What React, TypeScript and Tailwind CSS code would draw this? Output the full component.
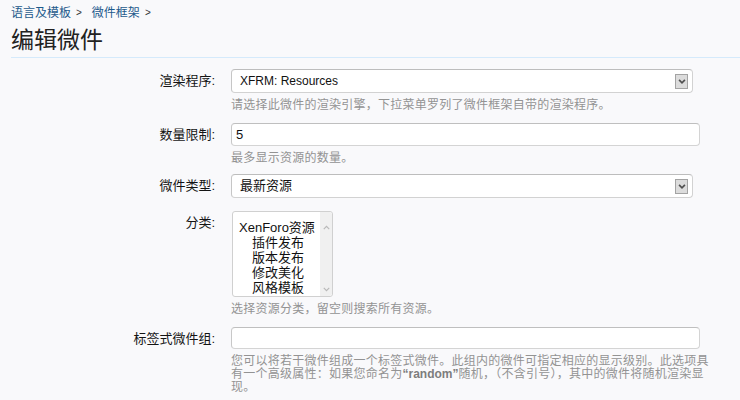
import type { ReactNode } from 'react';

const Chevron = ({ up = false, color = '#505050', w = 9, h = 6, sw = 2 }: { up?: boolean; color?: string; w?: number; h?: number; sw?: number }) => (
    <svg width={w} height={h} viewBox="0 0 9 6" fill="none">
        <path
            d={up ? 'M1 5 L4.5 1.5 L8 5' : 'M1 1 L4.5 4.5 L8 1'}
            stroke={color}
            strokeWidth={sw}
        />
    </svg>
);

const Label = ({ children }: { children: ReactNode }) => (
    <div className="w-[231px] shrink-0 pr-[16px] text-right text-[13px] leading-[24px] text-[#141414]">
        {children}
    </div>
);

const Help = ({ children }: { children: ReactNode }) => (
    <div className="mt-[6px] whitespace-nowrap text-[12px] leading-[13px] tracking-[0.25px] text-[#939393]">
        {children}
    </div>
);

const SelectBox = ({ value, small = false }: { value: string; small?: boolean }) => (
    <div className="flex h-[24px] w-[462px] items-center justify-between rounded-[4px] border border-[#d2d2d2] border-t-[#bdbdbd] border-l-[#c6c6c6] bg-white pl-[8px] pr-[4px]">
        <span className={small ? 'text-[12px] text-[#111]' : 'text-[13px] text-[#111]'}>{value}</span>
        <span className="flex h-[15px] w-[13px] items-center justify-center border border-[#a3a3a3] bg-[#dcdcdc]">
            <Chevron w={8} h={5} />
        </span>
    </div>
);

const TextInput = ({ value = '', h }: { value?: string; h: string }) => (
    <div className={`flex ${h} w-[469px] items-center rounded-[4px] border border-[#d4d4d4] border-t-[#bfbfbf] border-l-[#c8c8c8] bg-white pl-[4px] text-[13px] text-[#111]`}>
        {value}
    </div>
);

const categories = [
    { name: 'XenForo资源', child: false },
    { name: '插件发布', child: true },
    { name: '版本发布', child: true },
    { name: '修改美化', child: true },
    { name: '风格模板', child: true },
];

export default function App() {
    return (
        <div className="h-[400px] w-[740px] overflow-hidden bg-[#f9f9fb] font-['Liberation_Sans','Noto_Sans_CJK_SC',sans-serif]">
            {/* Header */}
            <div className="pl-[11px] pt-[6px]">
                <nav className="flex items-center text-[12px] leading-[14px]">
                    <span className="text-[#1d5a8c]">语言及模板</span>
                    <span className="ml-[5px] mr-[10px] text-[10px] text-[#333]">&gt;</span>
                    <span className="text-[#1d5a8c]">微件框架</span>
                    <span className="ml-[5px] text-[10px] text-[#333]">&gt;</span>
                </nav>
                <h1 className="mt-[5px] text-[23px] leading-[30px] text-[#222]">编辑微件</h1>
                <div className="mt-[2px] border-b border-[#d5eafb]" />
            </div>

            {/* Form */}
            <div className="flex flex-col">
                <div className="mt-[11px] flex">
                    <Label>渲染程序:</Label>
                    <div className="flex flex-col">
                        <SelectBox value="XFRM: Resources" small />
                        <Help>请选择此微件的渲染引擎，下拉菜单罗列了微件框架自带的渲染程序。</Help>
                    </div>
                </div>

                <div className="mt-[11px] flex">
                    <Label>数量限制:</Label>
                    <div className="flex flex-col">
                        <TextInput value="5" h="h-[23px]" />
                        <Help>最多显示资源的数量。</Help>
                    </div>
                </div>

                <div className="mt-[9px] flex">
                    <Label>微件类型:</Label>
                    <SelectBox value="最新资源" />
                </div>

                <div className="mt-[13px] flex">
                    <Label>分类:</Label>
                    <div className="flex flex-col">
                        <div className="ml-px flex h-[86px] w-[101px] rounded-[3px] border border-[#d0d0d0] bg-white">
                            <div className="flex-1 pl-[6px] pt-[8px] text-[13px] leading-[15px] text-[#111]">
                                {categories.map((c) => (
                                    <div key={c.name} className={c.child ? 'pl-[13px]' : ''}>
                                        {c.name}
                                    </div>
                                ))}
                            </div>
                            <div className="flex w-[12px] flex-col items-center justify-between rounded-r-[3px] bg-[#f0f0f0] pb-[4px] pt-[13px]">
                                <Chevron up color="#b8b8b8" w={7} h={5} sw={1.5} />
                                <Chevron color="#b8b8b8" w={7} h={5} sw={1.5} />
                            </div>
                        </div>
                        <Help>选择资源分类，留空则搜索所有资源。</Help>
                    </div>
                </div>

                <div className="mt-[11px] flex">
                    <Label>标签式微件组:</Label>
                    <div className="flex flex-col">
                        <TextInput h="h-[22px]" />
                        <Help>
                            您可以将若干微件组成一个标签式微件。此组内的微件可指定相应的显示级别。此选项具
                            <br />
                            有一个高级属性：如果您命名为
                            <b className="font-bold tracking-normal text-[#7d7d7d]">“random”</b>
                            随机，（不含引号），其中的微件将随机渲染显
                            <br />
                            现。
                        </Help>
                    </div>
                </div>
            </div>
        </div>
    );
}
